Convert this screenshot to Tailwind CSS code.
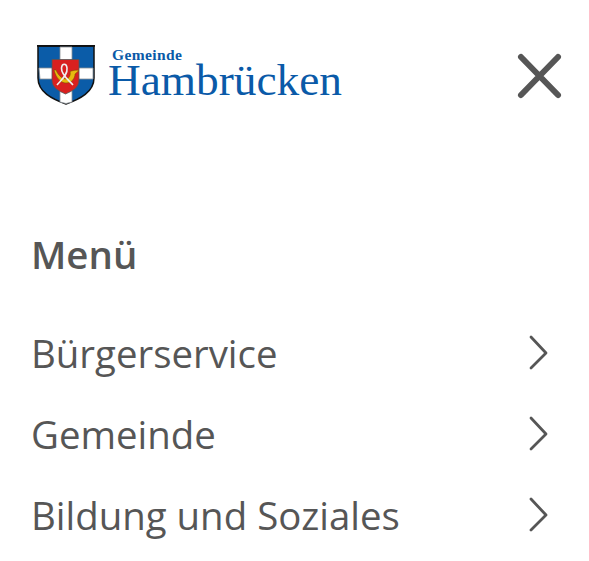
<!DOCTYPE html>
<html lang="de">
<head>
    <meta charset="UTF-8">
    <meta name="viewport" content="width=device-width, initial-scale=1.0">
    <title>Gemeinde Hambrücken</title>
    <script src="https://cdn.jsdelivr.net/npm/@tailwindcss/browser@4"></script>
</head>
<body class="bg-white h-[561px] overflow-hidden font-['Open_Sans',sans-serif] text-[#565656]">
    <header class="flex items-start justify-between pl-[37px] pr-[24px] pt-[45px]">
        <a href="#" class="flex items-start">
            <svg class="w-[58px] h-[60px]" viewBox="0 0 58 60">
                <path d="M1 1H57V33C57 47 43 54 29 59C15 54 1 47 1 33Z" fill="#0b5ca8" stroke="#111" stroke-width="1.500"/>
                <path d="M0 0.8H58" stroke="#111" stroke-width="2"/>
                <path d="M23 2H35V57L29 58.500L23 57Z" fill="#fff" stroke="#8a8f96" stroke-width="0.8"/>
                <path d="M2 23H56V34H3Z" fill="#fff" stroke="#8a8f96" stroke-width="0.8"/>
                <path d="M15 14.500H42V35C42 43 35 46 28.500 49C22 46 15 43 15 35Z" fill="#d8201f" stroke="#555" stroke-width="0.8"/>
                <path d="M17 25C19 33 24 38 29 38C35 38 38 33 38 29L42 25.500C41 25 37 25 33 26.500C34 30 32 34 29 34C25 34 21 30 19 25Z" fill="#e7b90f" stroke="#6b5200" stroke-width="0.5"/>
                <path d="M20 40C24 35 31 30 30 23C29.500 18 25 18 24.500 23C24 30 32 35 36 40" fill="none" stroke="#eee" stroke-width="1.600"/>
            </svg>
            <div class="ml-[13px] mt-[2px] font-['Liberation_Serif',serif] text-[#0a5aa8]">
                <div class="ml-[4px] text-[15.500px] leading-[15px] font-bold tracking-[0.4px]">Gemeinde</div>
                <div class="text-[45.300px] leading-[36px]">Hambrücken</div>
            </div>
        </a>
        <button class="mt-[6px]">
            <svg class="w-[50px] h-[50px]" viewBox="0 0 50 50" fill="none" stroke="#565656" stroke-width="6" stroke-linecap="round">
                <path d="M6 6L43 44M43 6L6 44"/>
            </svg>
        </button>
    </header>

    <nav class="pl-[31px] pr-[38px] pt-[126px]">
        <h2 class="text-[38.400px] leading-[46px] font-semibold">Menü</h2>
        <ul class="mt-[35px]">
            <li class="flex items-center justify-between h-[81px]">
                <span class="text-[38.400px] leading-[48px]">Bürgerservice</span>
                <svg class="w-[24px] h-[36px]" viewBox="0 0 24 36" fill="none" stroke="#565656" stroke-width="2.800" stroke-linecap="round" stroke-linejoin="round">
                    <path d="M4 2L19 18L4 33"/>
                </svg>
            </li>
            <li class="flex items-center justify-between h-[81px]">
                <span class="text-[38.400px] leading-[48px]">Gemeinde</span>
                <svg class="w-[24px] h-[36px]" viewBox="0 0 24 36" fill="none" stroke="#565656" stroke-width="2.800" stroke-linecap="round" stroke-linejoin="round">
                    <path d="M4 2L19 18L4 33"/>
                </svg>
            </li>
            <li class="flex items-center justify-between h-[81px]">
                <span class="text-[38.400px] leading-[48px]">Bildung und Soziales</span>
                <svg class="w-[24px] h-[36px]" viewBox="0 0 24 36" fill="none" stroke="#565656" stroke-width="2.800" stroke-linecap="round" stroke-linejoin="round">
                    <path d="M4 2L19 18L4 33"/>
                </svg>
            </li>
        </ul>
    </nav>
</body>
</html>
